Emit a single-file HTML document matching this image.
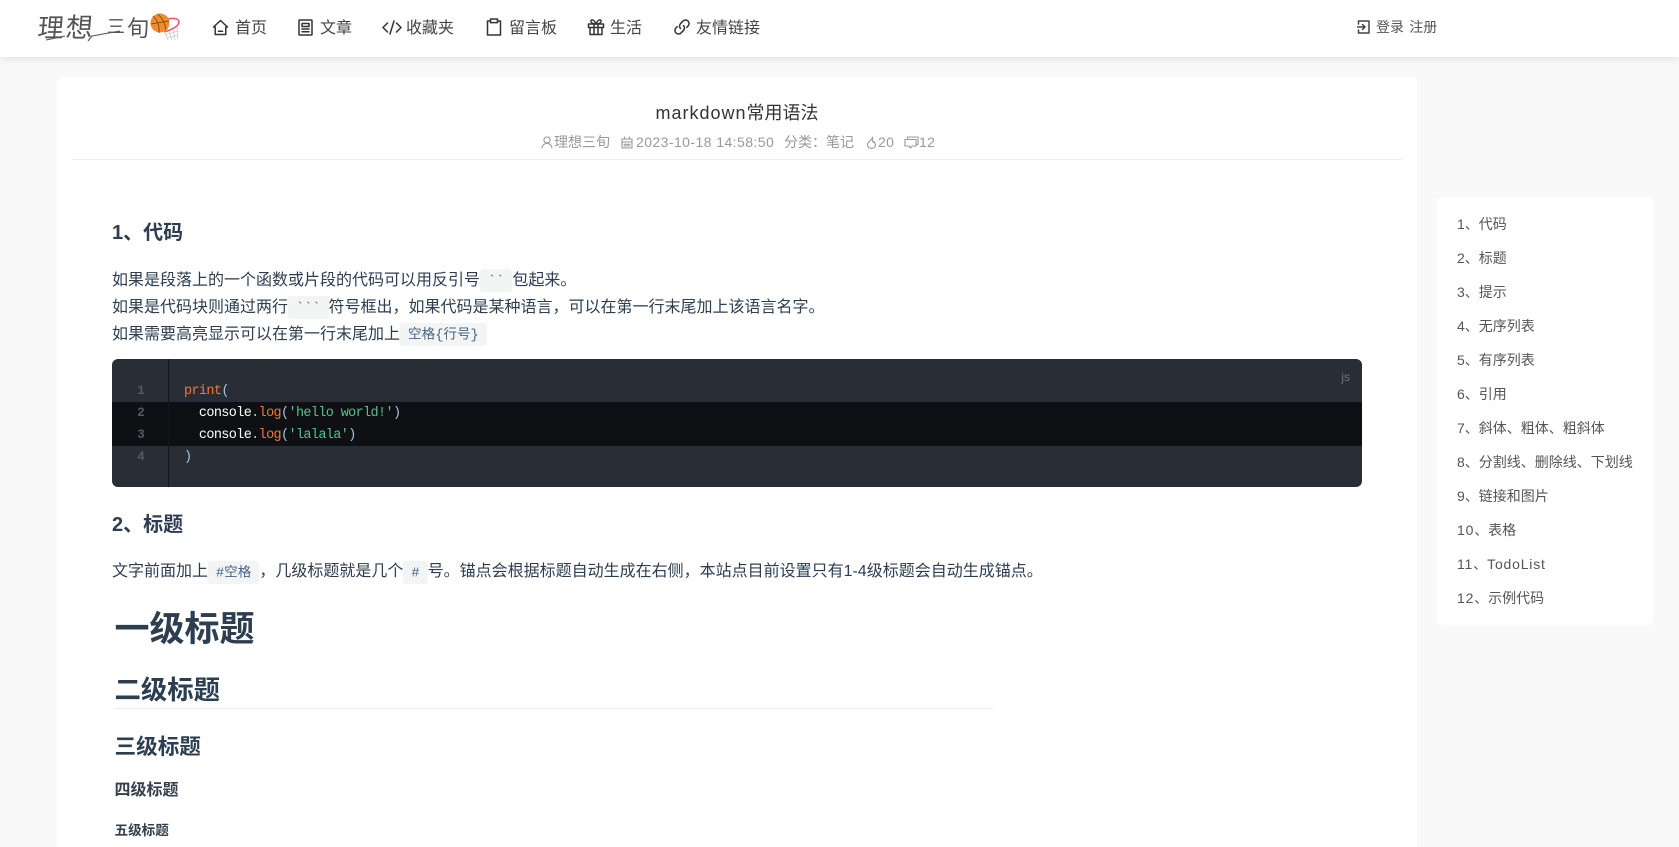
<!DOCTYPE html>
<html lang="zh">
<head>
<meta charset="utf-8">
<title>markdown常用语法</title>
<style>
html,body{margin:0;padding:0;width:1679px;height:847px;overflow:hidden;background:#f9f9f9}
body{position:relative;font-family:"Liberation Sans","Noto Sans CJK SC",sans-serif;color:#333}
.a{position:absolute;white-space:nowrap}
#hd{position:absolute;left:0;top:0;width:1679px;height:57px;background:#fff;box-shadow:0 2px 8px rgba(0,0,0,.1);z-index:3}
.nav{position:absolute;top:16.5px;line-height:24px;font-size:16px;color:#444;white-space:nowrap}
.ic{position:absolute;fill:none;stroke:#333;stroke-width:1.5;stroke-linecap:round;stroke-linejoin:round}
#card{position:absolute;left:57px;top:77px;width:1360px;height:800px;background:#fff;border-radius:5px}
#toc{position:absolute;left:1437px;top:197px;width:216px;height:428px;background:#fff;border-radius:5px}
.t{position:absolute;left:1457px;font-size:14px;line-height:20px;color:#555;white-space:nowrap}
.t span{letter-spacing:.8px}
.p{position:absolute;left:112px;font-size:16px;line-height:27px;color:#2c3e50;white-space:nowrap}
code{font-family:"Liberation Mono","Noto Sans CJK SC",monospace;font-size:13.6px;padding:5.500px 8px 2.500px;background:#f3f4f4;border-radius:3px;color:#476582}
.h{position:absolute;font-weight:700;color:#2c3e50;white-space:nowrap}
.m{position:absolute;top:132px;line-height:20px;font-size:14px;color:#999;white-space:nowrap}
.mi{position:absolute;fill:none;stroke:#999;stroke-width:1.1;stroke-linejoin:round;stroke-linecap:round}
#cb{position:absolute;left:112px;top:359px;width:1250px;height:128px;background:#292d35;border-radius:6px;overflow:hidden}
#cb .hl{position:absolute;left:0;top:43px;width:1250px;height:44px;background:#0e1014}
#cb .gl{position:absolute;left:56px;top:0;width:1px;height:128px;background:#14161b}
.ln,.cl{position:absolute;font-family:"Liberation Mono",monospace;font-size:13.500px;line-height:22px;white-space:pre}
.ln{left:8px;width:42px;text-align:center;color:#555b66;font-weight:700;font-size:12.500px}
.cl{left:72px;letter-spacing:-.64px;color:#fff;padding-top:.5px}
.o{color:#ee7a3a}.g{color:#58c08a}.b{color:#a9c3dd}
</style>
</head>
<body>
<div id="hd">
  <svg class="a" style="left:34px;top:10px" width="150" height="36" viewBox="0 0 150 36">
    <g font-family="'Noto Sans CJK SC',sans-serif" fill="#555">
      <text font-size="26" transform="translate(3 27) skewX(-5)">理</text>
      <text font-size="27" transform="translate(31 27) skewX(-5)">想</text>
      <text font-size="18" transform="translate(73 23)">三</text>
      <text font-size="22" transform="translate(93 26)">旬</text>
    </g>
    <path d="M12 30 31 26M54 31 58 26 86 21" fill="none" stroke="#555" stroke-width="1.100"/>
    <path d="M133 9Q145 7 145 12 144 18 130 22" fill="none" stroke="#ef5a6f" stroke-width="1.600"/>
    <path d="M131 22 134 30M135 21 138 30M139 19 141 30M143 17 144 29M131 25 144 21M133 28 144 25" fill="none" stroke="#ccc" stroke-width=".9"/>
    <circle cx="126" cy="13" r="9.500" fill="#ee8c2e"/>
    <path d="M119 6Q126 13 125 23M124 4Q131 11 132 20M117 14 135 11" fill="none" stroke="#7a3f10" stroke-width=".8"/>
  </svg>

  <svg class="ic" style="left:212px;top:19px" width="17" height="17" viewBox="0 0 17 17"><path d="M8.500 1.500 1.500 8H3.200V15.500H13.800V8H15.500Z"/><path d="M6.500 12.300H10.500"/></svg>
  <div class="nav" style="left:235px">首页</div>

  <svg class="ic" style="left:298px;top:19px" width="15" height="17" viewBox="0 0 15 17"><rect x="1" y="1" width="13" height="15" rx=".6"/><path d="M4 4.500H11V7.500H4ZM4 10H11M4 12.700H11"/></svg>
  <div class="nav" style="left:320px">文章</div>

  <svg class="ic" style="left:382px;top:19px" width="20" height="17" viewBox="0 0 20 17"><path d="M5.500 4 1 8.500 5.500 13M14.500 4 19 8.500 14.500 13M12 2 8 15"/></svg>
  <div class="nav" style="left:406px">收藏夹</div>

  <svg class="ic" style="left:486px;top:18px" width="16" height="18" viewBox="0 0 16 18"><path d="M4.500 3H1.500V17H14.500V3H11.500"/><rect x="4.500" y="1" width="7" height="3.600"/></svg>
  <div class="nav" style="left:509px">留言板</div>

  <svg class="ic" style="left:587px;top:18px" width="18" height="18" viewBox="0 0 18 18"><path d="M1.500 6H16.500V9.500H1.500ZM3 9.500V16.500H15V9.500M7 6V16.500M11 6V16.500"/><path d="M9 6C7 1 3.500 1 4 3.500 4.300 5 6 6 9 6ZM9 6C11 1 14.500 1 14 3.500 13.700 5 12 6 9 6Z"/></svg>
  <div class="nav" style="left:610px">生活</div>

  <svg class="ic" style="left:673px;top:18px" width="18" height="18" viewBox="0 0 18 18"><path d="M7.500 10.500C6 9 6.300 6.800 7.800 5.300L9.800 3.200C11.300 1.600 13.600 1.600 15 3 16.400 4.400 16.400 6.700 15 8.100L13.800 9.300"/><path d="M10.500 7.500C12 9 11.700 11.200 10.200 12.700L8.200 14.800C6.700 16.400 4.400 16.400 3 15 1.600 13.600 1.600 11.300 3 9.900L4.200 8.700"/></svg>
  <div class="nav" style="left:696px">友情链接</div>

  <svg class="ic" style="left:1357px;top:20px;stroke:#444" width="13" height="14" viewBox="0 0 13 14"><path d="M1.500 4V1H12V13H1.500V10"/><path d="M.5 7H8M5.500 4.500 8 7 5.500 9.500"/></svg>
  <div class="nav" style="left:1376px;top:15px;font-size:14px;color:#555;word-spacing:1.500px">登录 注册</div>
</div>

<div id="card"></div>
<div id="toc"></div>

<div class="a" style="left:57px;width:1360px;text-align:center;top:100px;font-size:18px;line-height:26px;color:#333;letter-spacing:1px">markdown<span style="letter-spacing:0">常用语法</span></div>

<svg class="mi" style="left:541px;top:136px" width="12" height="13" viewBox="0 0 12 13"><circle cx="6" cy="4" r="3.100"/><path d="M1 12C1.500 9 3.500 7.500 6 7.500S10.500 9 11 12"/></svg>
<div class="m" style="left:554px">理想三旬</div>
<svg class="mi" style="left:621px;top:136px" width="12" height="13" viewBox="0 0 12 13"><path d="M1 3H11V12H1ZM1 6H11M3.500 1V3M8.500 1V3M3 8.300H9M3 10H9"/></svg>
<div class="m" style="left:636px;letter-spacing:.43px">2023-10-18 14:58:50</div>
<div class="m" style="left:784px">分类：笔记</div>
<svg class="mi" style="left:866px;top:136px" width="11" height="13" viewBox="0 0 11 13"><path d="M6.500 1C6.500 4 1.500 5.500 1.500 9 1.500 11 3.200 12.300 5.500 12.300S9.500 11 9.500 9C9.500 7.500 8.600 6.800 8 5.500 7.500 7 6.500 7 6.500 1Z"/></svg>
<div class="m" style="left:878px;letter-spacing:.4px">20</div>
<svg class="mi" style="left:904px;top:136px" width="15" height="13" viewBox="0 0 15 13"><path d="M3.500 3V1H14V8.500H12.500M1 3.500H12V10H8L6.500 12 5 10H1Z"/></svg>
<div class="m" style="left:919px;letter-spacing:.4px">12</div>
<div class="a" style="left:72px;top:159px;width:1330px;height:1px;background:#eee"></div>

<div class="h" style="left:112px;top:218px;font-size:20px;line-height:30px">1、代码</div>
<div class="p" style="top:266.500px">如果是段落上的一个函数或片段的代码可以用反引号<code>&#96;&#96;</code>包起来。</div>
<div class="p" style="top:293.500px">如果是代码块则通过两行<code>&#96;&#96;&#96;</code>符号框出，如果代码是某种语言，可以在第一行末尾加上该语言名字。</div>
<div class="p" style="top:320.500px">如果需要高亮显示可以在第一行末尾加上<code>空格{行号}</code></div>

<div id="cb">
  <div class="hl"></div><div class="gl"></div>
  <div class="ln" style="top:21px">1</div><div class="ln" style="top:43px">2</div><div class="ln" style="top:65px">3</div><div class="ln" style="top:87px">4</div>
  <div class="cl" style="top:21px"><span class="o">print</span><span class="b">(</span></div>
  <div class="cl" style="top:43px">  console<span class="b">.</span><span class="o">log</span><span class="b">(</span><span class="g">'hello world!'</span><span class="b">)</span></div>
  <div class="cl" style="top:65px">  console<span class="b">.</span><span class="o">log</span><span class="b">(</span><span class="g">'lalala'</span><span class="b">)</span></div>
  <div class="cl" style="top:87px"><span class="b">)</span></div>
  <div class="a" style="right:12px;top:9px;font-size:12px;line-height:18px;color:#6c7480">js</div>
</div>

<div class="h" style="left:112px;top:510px;font-size:20px;line-height:30px">2、标题</div>
<div class="p" style="top:558px">文字前面加上<code>#空格</code>，几级标题就是几个<code>#</code>号。锚点会根据标题自动生成在右侧，本站点目前设置只有1-4级标题会自动生成锚点。</div>

<div class="h" style="left:114.500px;top:605px;font-size:35px;line-height:50px">一级标题</div>
<div class="h" style="left:114.500px;top:671px;font-size:26.400px;line-height:38px">二级标题</div>
<div class="a" style="left:114.500px;top:708px;width:878px;height:1px;background:#eaecef"></div>
<div class="h" style="left:114.500px;top:730.500px;font-size:21.600px;line-height:32px">三级标题</div>
<div class="h" style="left:114.500px;top:778.500px;font-size:16px;line-height:24px;color:#34404c">四级标题</div>
<div class="h" style="left:114.500px;top:820.500px;font-size:13.600px;line-height:20px;color:#34404c">五级标题</div>

<div class="t" style="top:214px">1、代码</div>
<div class="t" style="top:248px">2、标题</div>
<div class="t" style="top:282px">3、提示</div>
<div class="t" style="top:316px">4、无序列表</div>
<div class="t" style="top:350px">5、有序列表</div>
<div class="t" style="top:384px">6、引用</div>
<div class="t" style="top:418px">7、斜体、粗体、粗斜体</div>
<div class="t" style="top:452px">8、分割线、删除线、下划线</div>
<div class="t" style="top:486px">9、链接和图片</div>
<div class="t" style="top:520px"><span>10</span>、表格</div>
<div class="t" style="top:554px"><span>11</span>、<span>TodoList</span></div>
<div class="t" style="top:588px"><span>12</span>、示例代码</div>
</body>
</html>
